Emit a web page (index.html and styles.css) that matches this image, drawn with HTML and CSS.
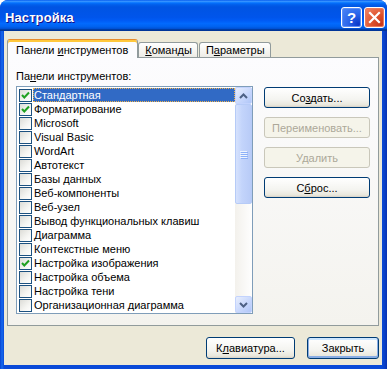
FILE: index.html
```html
<!DOCTYPE html>
<html lang="ru">
<head>
<meta charset="utf-8">
<title>Настройка</title>
<link rel="stylesheet" href="styles.css">
</head>
<body>
<div class="window">
  <div class="titlebar">
    <span class="title">Настройка</span>
    <div class="caption-buttons">
      <div class="cbtn help"><span>?</span></div>
      <div class="cbtn close">
        <svg width="21" height="21" viewBox="0 0 21 21"><path d="M6 6 L15 15 M15 6 L6 15" stroke="#fff" stroke-width="2.2" stroke-linecap="square" fill="none"/></svg>
      </div>
    </div>
  </div>
  <div class="client">
    <div class="tabs">
      <div class="tab active"><span>Панели <u>и</u>нструментов</span></div>
      <div class="tab"><span><u>К</u>оманды</span></div>
      <div class="tab"><span>П<u>а</u>раметры</span></div>
    </div>
    <div class="panel">
      <div class="label">Па<u>н</u>ели инструментов:</div>
      <div class="panel-body">
        <div class="listbox">
          <div class="items">
            <div class="item selected"><span class="cb checked"><svg width="11" height="11" viewBox="0 0 11 11"><path d="M2 5 L4.3 7.5 L9 2.5" stroke="#21a121" stroke-width="2" fill="none"/></svg></span><span class="txt">Стандартная</span></div>
            <div class="item"><span class="cb checked"><svg width="11" height="11" viewBox="0 0 11 11"><path d="M2 5 L4.3 7.5 L9 2.5" stroke="#21a121" stroke-width="2" fill="none"/></svg></span><span class="txt">Форматирование</span></div>
            <div class="item"><span class="cb"></span><span class="txt">Microsoft</span></div>
            <div class="item"><span class="cb"></span><span class="txt">Visual Basic</span></div>
            <div class="item"><span class="cb"></span><span class="txt">WordArt</span></div>
            <div class="item"><span class="cb"></span><span class="txt">Автотекст</span></div>
            <div class="item"><span class="cb"></span><span class="txt">Базы данных</span></div>
            <div class="item"><span class="cb"></span><span class="txt">Веб-компоненты</span></div>
            <div class="item"><span class="cb"></span><span class="txt">Веб-узел</span></div>
            <div class="item"><span class="cb"></span><span class="txt">Вывод функциональных клавиш</span></div>
            <div class="item"><span class="cb"></span><span class="txt">Диаграмма</span></div>
            <div class="item"><span class="cb"></span><span class="txt">Контекстные меню</span></div>
            <div class="item"><span class="cb checked"><svg width="11" height="11" viewBox="0 0 11 11"><path d="M2 5 L4.3 7.5 L9 2.5" stroke="#21a121" stroke-width="2" fill="none"/></svg></span><span class="txt">Настройка изображения</span></div>
            <div class="item"><span class="cb"></span><span class="txt">Настройка объема</span></div>
            <div class="item"><span class="cb"></span><span class="txt">Настройка тени</span></div>
            <div class="item"><span class="cb"></span><span class="txt">Организационная диаграмма</span></div>
          </div>
          <div class="scrollbar">
            <div class="sbtn"><svg width="9" height="6" viewBox="0 0 9 6"><path d="M1 5 L4.5 1.5 L8 5" stroke="#4d6185" stroke-width="2" fill="none"/></svg></div>
            <div class="thumb"><span class="grip"></span><span class="grip"></span><span class="grip"></span><span class="grip"></span></div>
            <div class="track"></div>
            <div class="sbtn"><svg width="9" height="6" viewBox="0 0 9 6"><path d="M1 1 L4.5 4.5 L8 1" stroke="#4d6185" stroke-width="2" fill="none"/></svg></div>
          </div>
        </div>
        <div class="side-buttons">
          <div class="btn"><span>Со<u>з</u>дать...</span></div>
          <div class="btn disabled"><span>Переименовать...</span></div>
          <div class="btn disabled"><span>Удалить</span></div>
          <div class="btn"><span>С<u>б</u>рос...</span></div>
        </div>
      </div>
    </div>
    <div class="footer">
      <div class="btn keyboard"><span>К<u>л</u>авиатура...</span></div>
      <div class="btn default close-btn"><span>Закрыть</span></div>
    </div>
  </div>
</div>
</body>
</html>
```

FILE: styles.css
```css
* { box-sizing: border-box; }
html, body { margin: 0; padding: 0; background: #ffffff; }
body {
  font-family: "Liberation Sans", Arial, sans-serif;
  font-size: 11px;
  color: #000;
}
u { text-decoration: underline; text-underline-offset: 1px; }

.window {
  width: 387px;
  height: 369px;
  display: flex;
  flex-direction: column;
  background: linear-gradient(to right, #0842d0 0, #166aee 2px, #0a4ad8 4px, #0a4ad8 calc(100% - 5px), #0a3ec4 calc(100% - 2px), #0831b0 100%);
  border-radius: 8px 8px 0 0;
}

.titlebar {
  height: 31px;
  flex: none;
  display: flex;
  align-items: center;
  justify-content: space-between;
  padding: 4px 2px 0 5px;
  border-radius: 8px 8px 0 0;
  background: linear-gradient(to bottom, #0058ee 0%, #3a93ff 4%, #288eff 6%, #127dff 8%, #036ffc 10%, #0262ee 14%, #0057e5 20%, #0054e3 24%, #0055eb 56%, #005bf5 66%, #026afe 76%, #0062ef 86%, #0052d6 92%, #0040ab 94%, #003092 100%);
}
.title {
  color: #fff;
  font-weight: bold;
  font-size: 13px;
  letter-spacing: 0.1px;
  text-shadow: 1px 1px #0f1089;
}
.caption-buttons { display: flex; gap: 2px; }
.cbtn {
  width: 21px;
  height: 21px;
  border: 1px solid #fff;
  border-radius: 3px;
  display: flex;
  align-items: center;
  justify-content: center;
}
.cbtn svg { display: block; margin: -1px; }
.help {
  background: radial-gradient(circle at 85% 85%, #0a39c9 0%, #2b66eb 45%, #4d88f6 100%);
  box-shadow: inset 0 0 0 1px #5c8ff7;
}
.help span {
  color: #fff;
  font-weight: bold;
  font-size: 15px;
  line-height: 1;
}
.close {
  background: radial-gradient(circle at 85% 85%, #c7371a 0%, #e0552f 45%, #f08a6c 100%);
  box-shadow: inset 0 0 0 1px #eb7a5b;
}

.client {
  flex: 1;
  margin: 0 5px 4px 4px;
  background: #ece9d8;
  display: flex;
  flex-direction: column;
  padding: 8px 3px 0 3px;
}

.tabs {
  display: flex;
  align-items: flex-end;
  height: 18px;
  position: relative;
  z-index: 1;
}
.tab {
  height: 15px;
  padding: 0 5px 0 6px;
  border: 1px solid #919b9c;
  border-bottom: none;
  border-radius: 3px 3px 0 0;
  background: linear-gradient(to bottom, #ffffff, #f3f2ed 70%, #ecebe6);
  display: flex;
  align-items: center;
  line-height: 13px;
  margin-right: 1px;
  white-space: nowrap;
}
.tab.active {
  height: 19px;
  margin-bottom: -1px;
  padding: 2px 9px 0 8px;
  border-top: 1px solid #e68b2c;
  box-shadow: inset 0 2px 0 #ffc83c;
  background: #fcfcfe;
  margin-right: 0;
}

.panel {
  height: 269px;
  flex: none;
  border: 1px solid #919b9c;
  background: linear-gradient(to bottom, #fcfcfe, #f4f3ee);
  padding: 12px 8px 0 8px;
  display: flex;
  flex-direction: column;
}
.label { line-height: 13px; height: 16px; }

.panel-body { display: flex; gap: 11px; align-items: flex-start; }

.listbox {
  width: 237px;
  height: 228px;
  border: 1px solid #7f9db9;
  background: #fff;
  display: flex;
}
.items { flex: 1; padding-top: 1px; }
.item {
  height: 14px;
  display: flex;
  align-items: center;
}
.cb {
  width: 13px;
  height: 13px;
  margin-left: 2px;
  flex: none;
  border: 1px solid #1c5180;
  background: linear-gradient(135deg, #dcdcd7 0%, #f5f5f2 60%, #ffffff 100%);
  display: flex;
  align-items: center;
  justify-content: center;
}
.cb svg { display: block; }
.txt {
  flex: 1;
  margin-left: 1px;
  padding-left: 1px;
  height: 14px;
  line-height: 14px;
  white-space: nowrap;
}
.item.selected .txt {
  background: #316ac5;
  color: #fff;
  outline: 1px dotted #f0b34d;
  outline-offset: -1px;
}

.scrollbar {
  width: 17px;
  flex: none;
  display: flex;
  flex-direction: column;
  background: linear-gradient(to right, #f3f1ec, #fefefe);
}
.sbtn {
  height: 17px;
  flex: none;
  border: 1px solid #c3d3fd;
  border-radius: 2px;
  background: linear-gradient(135deg, #e8eefd 0%, #c6d6fc 60%, #b0c6f8 100%);
  display: flex;
  align-items: center;
  justify-content: center;
}
.sbtn svg { display: block; }
.thumb {
  height: 100px;
  flex: none;
  border: 1px solid #b6cbf7;
  border-radius: 2px;
  background: linear-gradient(to right, #d6e2fd 0%, #c3d4fb 40%, #b8cbf7 100%);
  display: flex;
  flex-direction: column;
  align-items: center;
  justify-content: center;
  gap: 1px;
}
.grip {
  width: 7px;
  height: 1px;
  background: #eef4fe;
  box-shadow: 1px 1px 0 #8cb0f8;
}
.track { flex: 1; }

.side-buttons {
  margin-top: 1px;
  display: flex;
  flex-direction: column;
  gap: 9px;
}
.btn {
  height: 21px;
  border: 1px solid #003c74;
  border-radius: 3px;
  background: linear-gradient(to bottom, #ffffff 0%, #f4f4f0 60%, #e9e7dc 90%, #d6d0c5 100%);
  display: flex;
  align-items: center;
  justify-content: center;
  white-space: nowrap;
}
.side-buttons .btn { width: 106px; }
.btn.disabled {
  border-color: #c9c7ba;
  background: #f5f4ea;
  color: #aca899;
}

.footer {
  display: flex;
  justify-content: flex-end;
  gap: 12px;
  padding-top: 11px;
  padding-right: 0;
}
.footer .btn { height: 22px; }
.keyboard { width: 89px; }
.close-btn { width: 72px; }
.btn.default {
  box-shadow: inset 0 -1px 0 1px #89ade4, inset 0 1px 0 1px #cee7ff;
}
```
